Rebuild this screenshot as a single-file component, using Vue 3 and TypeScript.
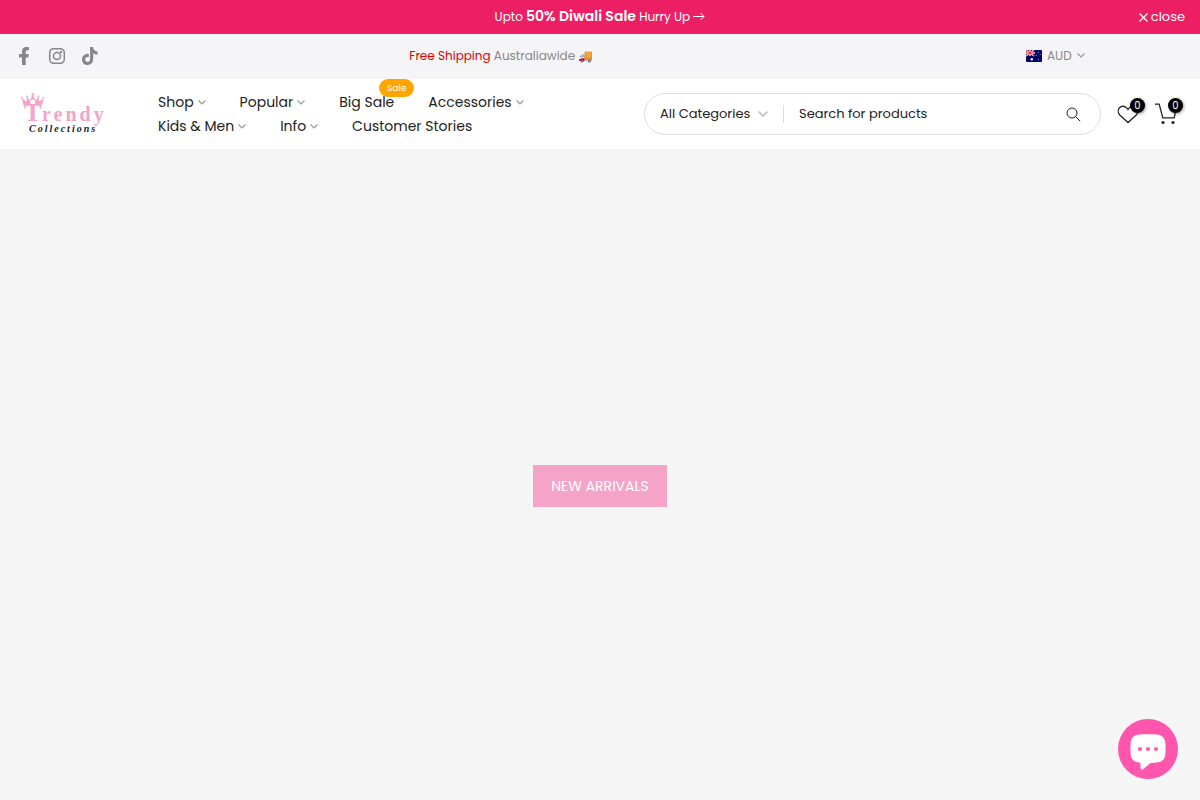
<script setup lang="ts">
import { ref } from 'vue'

interface NavItem {
  label: string
  menu: boolean
  badge?: string
}

const navItems: NavItem[] = [
  { label: 'Shop', menu: true },
  { label: 'Popular', menu: true },
  { label: 'Big Sale', menu: false, badge: 'Sale' },
  { label: 'Accessories', menu: true },
  { label: 'Kids & Men', menu: true },
  { label: 'Info', menu: true },
  { label: 'Customer Stories', menu: false },
]

const query = ref('')
const category = ref('all')
const currency = ref('aud')
</script>

<template>
  <div class="page">
    <div class="announcement">
      <a href="#" class="promo">
        Upto <strong>50% Diwali Sale</strong> Hurry Up
        <svg width="12" height="9" viewBox="0 0 12 9" fill="none" stroke="currentColor"><path d="M0 4.500h11M7.500 1l3.500 3.500L7.500 8" /></svg>
      </a>
      <button type="button" class="close">
        <svg width="9" height="9" viewBox="0 0 9 9" fill="none" stroke="currentColor" stroke-width="1.200"><path d="M.5.5l8 8M8.500.5l-8 8" /></svg>
        close
      </button>
    </div>

    <div class="topbar">
      <div class="social">
        <a href="#" aria-label="Facebook">
          <svg width="18" height="18" viewBox="0 0 18 18" fill="currentColor"><path d="M7 18v-7.500H4V7h3V4.400C7 1.500 8.600 0 11.300 0 12.500 0 14 .2 14 .2v3h-1.600c-1.300 0-1.700.8-1.700 1.600V7h3.100l-.5 3.500h-2.600V18z" /></svg>
        </a>
        <a href="#" aria-label="Instagram">
          <svg width="18" height="18" viewBox="0 0 18 18" fill="none" stroke="currentColor" stroke-width="1.500"><rect x="1.700" y="1.700" width="14.600" height="14.600" rx="4" /><circle cx="9" cy="9" r="3.500" /><circle cx="13" cy="5" r=".5" /></svg>
        </a>
        <a href="#" aria-label="TikTok">
          <svg width="18" height="18" viewBox="0 0 18 18" fill="currentColor"><path d="M9 0h3.100c.1 2.500 1.600 4.200 4.400 4.400v3.100c-1.700 0-3.100-.5-4.300-1.300v5.900c0 3.700-2.400 5.900-5.400 5.900C3.500 18 1 15.500 1 12.400c0-3.500 2.800-6.100 6.800-5.700v3.400c-2-.5-3.600.6-3.600 2.300 0 1.400 1.100 2.500 2.500 2.500 1.600 0 2.400-1.100 2.400-2.900z" /></svg>
        </a>
      </div>
      <p class="shipping"><span>Free Shipping</span> Australiawide 🚚</p>
      <label class="currency">
        <svg class="flag" width="16" height="12" viewBox="0 0 16 12">
          <rect width="16" height="12" rx="1" fill="#006" />
          <path d="M0 0l8 6M8 0L0 6" stroke="#fff" stroke-width="1.500" />
          <path d="M4 0v6M0 3h9" stroke="#fff" stroke-width="2" />
          <path d="M0 0l8 6M8 0L0 6" stroke="#d8283a" stroke-width=".6" />
          <path d="M4 0v6M0 3h9" stroke="#e8192c" />
          <circle cx="5.800" cy="9.300" r="1.200" fill="#fff" />
          <g fill="#aab0dd"><circle cx="12.200" cy="2.300" r=".6" /><circle cx="10.300" cy="5.300" r=".6" /><circle cx="14.200" cy="4.500" r=".6" /><circle cx="12.200" cy="9.800" r=".6" /></g>
        </svg>
        <select v-model="currency" aria-label="Currency">
          <option value="aud">AUD</option>
        </select>
        <svg class="chevron" width="8" height="5" viewBox="0 0 8 5"><path d="M.5.5L4 4l3.500-3.500" /></svg>
      </label>
    </div>

    <header class="header">
      <a href="#" class="logo" aria-label="Trendy Collections">
        <svg width="86" height="42" viewBox="0 0 86 42">
          <path fill="#f5a3c7" d="M2.500 12.500L1 5.500 5.500 8.500 6 4l3 3.500L11.700 1l2.800 6.500L17.500 4l.5 4.500 4.500-3-1.500 7z" />
          <g fill="#f5a3c7"><circle cx="1" cy="5" r="1" /><circle cx="6" cy="3.500" r="1" /><circle cx="11.700" cy="1.200" r="1.200" /><circle cx="17.500" cy="3.500" r="1" /><circle cx="22.300" cy="5" r="1" /></g>
          <circle cx="11.700" cy="9" r="2.500" fill="#fff" />
          <text class="logo-initial" x="3" y="28">T</text>
          <text class="logo-name" x="21" y="28">rendy</text>
          <text class="logo-sub" x="8" y="39">Collections</text>
        </svg>
      </a>

      <nav class="nav" aria-label="Main">
        <a v-for="item in navItems" :key="item.label" href="#">
          {{ item.label }}
          <svg v-if="item.menu" class="chevron" width="8" height="5" viewBox="0 0 8 5"><path d="M.5.5L4 4l3.500-3.500" /></svg>
          <span v-if="item.badge" class="badge">{{ item.badge }}</span>
        </a>
      </nav>

      <form class="search" role="search" @submit.prevent>
        <label class="category">
          <select v-model="category" aria-label="Category">
            <option value="all">All Categories</option>
          </select>
          <svg class="chevron wide" width="10" height="6" viewBox="0 0 10 6"><path d="M.5.5L5 5 9.500.5" /></svg>
        </label>
        <input v-model="query" type="search" aria-label="Search for products" placeholder="Search for products" />
        <button type="submit" aria-label="Search">
          <svg width="15" height="15" viewBox="0 0 15 15" fill="none" stroke="currentColor"><circle cx="6" cy="6" r="5" /><path d="M9.700 9.700l4.500 4.500" /></svg>
        </button>
      </form>

      <div class="actions">
        <a href="#" aria-label="Wishlist">
          <svg width="22" height="22" viewBox="0 0 22 22" fill="none" stroke="currentColor" stroke-width="1.300"><path d="M11 19.500L3 12.200C.8 10 .7 6.800 2.500 4.800c2.100-2.300 5.600-2 7.500.4l1 1.200 1-1.200c1.900-2.400 5.400-2.700 7.500-.4 1.800 2 1.700 5.200-.5 7.400z" /></svg>
          <span class="count">0</span>
        </a>
        <a href="#" aria-label="Cart">
          <svg width="22" height="22" viewBox="0 0 22 22" fill="none" stroke="currentColor" stroke-width="1.300"><path d="M0 1.200h4.200l3.600 13.600h11.500L21 5" /><circle cx="8" cy="19.500" r="1.600" fill="currentColor" stroke="none" /><circle cx="18" cy="19.500" r="1.600" fill="currentColor" stroke="none" /></svg>
          <span class="count">0</span>
        </a>
      </div>
    </header>

    <main class="hero">
      <a href="#" class="cta">NEW ARRIVALS</a>
    </main>

    <button type="button" class="chat" aria-label="Chat">
      <svg width="36" height="36" viewBox="0 0 36 36">
        <path fill="#fff" d="M9 .5C15 0 21 0 27 .5c5 .3 8 3.500 8.300 8 .4 4 .4 8 0 12-.3 4.500-3.300 7.700-8.300 8-2 .2-4.500.3-6.500.4l-7 6c-1.300 1.100-3 .5-3-1.200v-5L9 28.500c-5-.3-8-3.500-8.300-8-.4-4-.4-8 0-12C1 4 4 .8 9 .5z" />
        <g fill="#ff55ac"><circle cx="10" cy="15" r="2" /><circle cx="18" cy="15" r="2" /><circle cx="26" cy="15" r="2" /></g>
      </svg>
    </button>
  </div>
</template>

<style>
body {
  margin: 0;
}
</style>

<style scoped>
.page {
  display: flex;
  flex-direction: column;
  min-height: 100vh;
  background: #f5f5f5;
  color: #222;
  font-family: Poppins, Inter, sans-serif;
  font-size: 14px;
}

a {
  color: inherit;
  text-decoration: none;
}

button,
input,
select {
  margin: 0;
  padding: 0;
  border: 0;
  outline: 0;
  background: none;
  color: inherit;
  font: inherit;
  appearance: none;
}

button,
select {
  cursor: pointer;
}

svg {
  flex: none;
}

.chevron {
  fill: none;
  stroke: #999;
  stroke-width: 1.2;
}

.chevron.wide {
  stroke: #bbb;
  stroke-width: 1.5;
}

.announcement {
  display: grid;
  grid-template-columns: 1fr auto 1fr;
  align-items: center;
  height: 34px;
  padding: 0 15px;
  background: #ec1f64;
  color: #fff;
  font-size: 12px;
}

.promo {
  grid-column: 2;
  padding-bottom: 2px;
  line-height: 32px;
}

.promo strong {
  font-size: 14px;
  font-weight: 600;
}

.close {
  display: flex;
  align-items: center;
  justify-self: end;
  gap: 3px;
  padding-bottom: 1px;
  font-size: 13px;
}

.topbar {
  display: grid;
  box-sizing: border-box;
  grid-template-columns: 3fr 4fr 4fr;
  align-items: center;
  height: 45px;
  padding: 0 115px 2px 15px;
  background: #f5f5f8;
  color: #878787;
  font-size: 12px;
}

.social {
  display: flex;
  gap: 15px;
}

.social svg {
  display: block;
}

.shipping {
  margin: 0;
  text-align: center;
}

.shipping span {
  color: #e00000;
}

.currency {
  display: flex;
  align-items: center;
  justify-self: end;
  gap: 5px;
}

.header {
  display: flex;
  align-items: center;
  height: 70px;
  padding: 0 22px 0 21px;
  background: #fff;
}

.logo {
  width: 137px;
  flex: none;
}

.logo svg {
  display: block;
}

.logo text {
  font-family: "Liberation Serif", serif;
  font-weight: 700;
}

.logo .logo-initial {
  fill: #f5a3c7;
  font-size: 26px;
}

.logo .logo-name {
  fill: #f5a3c7;
  font-size: 20px;
  letter-spacing: 3px;
}

.logo .logo-sub {
  fill: #222;
  font-size: 10px;
  font-style: italic;
  letter-spacing: 2px;
}

.nav {
  display: flex;
  flex: 1;
  flex-wrap: wrap;
  column-gap: 34px;
}

.nav a {
  position: relative;
  display: flex;
  align-items: center;
  gap: 4px;
  line-height: 24px;
  white-space: nowrap;
}

.badge {
  position: absolute;
  top: -11px;
  right: -20px;
  padding: 0 8px;
  border-radius: 9px;
  background: #ffa500;
  color: #fff;
  font-size: 9px;
  line-height: 18px;
}

.search {
  display: flex;
  flex: none;
  align-items: center;
  box-sizing: border-box;
  width: 40%;
  max-width: 457px;
  height: 42px;
  padding: 0 19px 0 15px;
  border: 1px solid #ddd;
  border-radius: 21px;
  font-size: 13px;
}

.category {
  display: flex;
  align-items: center;
  gap: 7px;
  padding-right: 15px;
  border-right: 1px solid #ddd;
  line-height: 18px;
}

.search input {
  flex: 1;
  min-width: 0;
  padding-left: 15px;
}

.search input::placeholder {
  color: #222;
  opacity: 1;
}

.search button,
.search button svg {
  display: block;
}

.actions {
  display: flex;
  gap: 16px;
  margin-left: 16px;
  padding-right: 1px;
}

.actions a {
  position: relative;
}

.actions svg {
  display: block;
}

.count {
  position: absolute;
  top: -5px;
  right: -6px;
  width: 15px;
  border-radius: 50%;
  background: #000;
  box-shadow: 1px 1px 3px #0006;
  color: #fff;
  font-size: 10px;
  line-height: 15px;
  text-align: center;
}

.hero {
  display: flex;
  flex: 1;
  align-items: center;
  justify-content: center;
  padding-top: 23px;
}

.cta {
  padding: 0 18px;
  background: #f6a3c8;
  color: #fff;
  line-height: 42px;
}

.chat {
  position: fixed;
  right: 22px;
  bottom: 21px;
  display: grid;
  box-sizing: border-box;
  place-items: center;
  width: 60px;
  height: 60px;
  padding-top: 6px;
  border-radius: 50%;
  background: #ff55ac;
}
</style>
